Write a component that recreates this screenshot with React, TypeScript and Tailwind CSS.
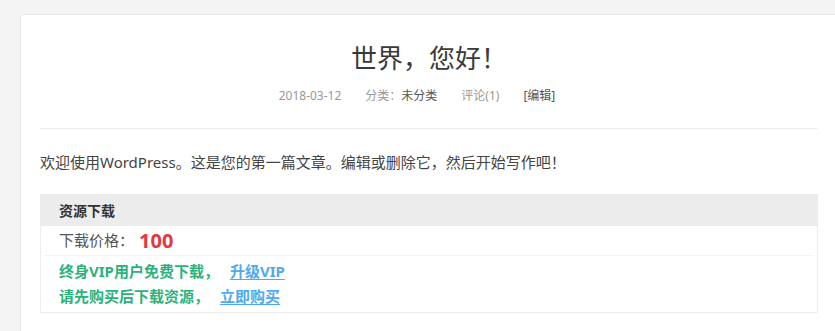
import React from 'react';

const font = { fontFamily: '"Noto Sans", "Noto Sans CJK SC", sans-serif' };

export default function App() {
  return (
    <div className="h-screen w-full overflow-hidden bg-[#f4f4f4] pt-[14px] pl-5" style={font}>
      <div className="w-[818px] bg-white border border-[#e9e9e9] rounded-[3px] px-[19px] pb-10">
        {/* Header */}
        <div className="pt-[25px] pb-[22px] border-b border-[#ececec]">
          <h1 className="text-center text-[26px] leading-[36px] text-[#3a3a3a]">世界，您好！</h1>
          <div className="mt-[10px] flex justify-center text-[12px] leading-[20px] text-[#999]">
            <span className="mr-6">2018-03-12</span>
            <span className="mr-6">
              分类：<span className="text-[#555]">未分类</span>
            </span>
            <span className="mr-6">评论(1)</span>
            <span className="mr-6 text-[#555]">[编辑]</span>
          </div>
        </div>

        {/* Content */}
        <p className="mt-[21px] text-[15px] leading-[24px] text-[#444]">
          欢迎使用WordPress。这是您的第一篇文章。编辑或删除它，然后开始写作吧！
        </p>

        {/* Download box */}
        <div className="mt-5 border border-[#ececec]">
          <div className="h-[31px] bg-[#ececec] pl-[18px] flex items-center text-[14px] font-bold text-[#333]">
            资源下载
          </div>
          <div className="mx-[3px]">
            <div className="h-[30px] pl-[15px] flex items-center border-b border-[#f3f3f3] text-[15px] text-[#555]">
              下载价格：
              <span className="ml-[5px] text-[20px] font-bold text-[#e4393c]">100</span>
            </div>
            <div className="pl-[15px] pt-[3px] pb-[3px] text-[15px] font-bold leading-[25px]">
              <div className="text-[#2ab27b]">
                终身VIP用户免费下载，
                <a href="#" className="ml-[11px] text-[#4daaf0] underline underline-offset-2">升级VIP</a>
              </div>
              <div className="text-[#2ab27b]">
                请先购买后下载资源，
                <a href="#" className="ml-[11px] text-[#4daaf0] underline underline-offset-2">立即购买</a>
              </div>
            </div>
          </div>
        </div>
      </div>
    </div>
  );
}
